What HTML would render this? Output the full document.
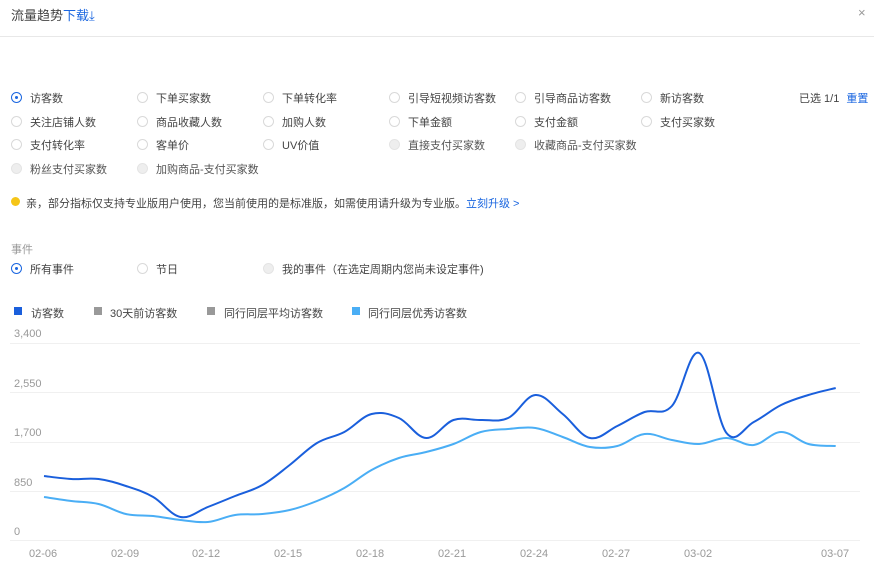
<!DOCTYPE html>
<html><head><meta charset="utf-8"><style>
body{margin:0;width:874px;height:574px;background:#fff;font-family:"Liberation Sans","Noto Sans CJK SC",sans-serif;font-size:11px;color:#444;position:relative;overflow:hidden}
.a{position:absolute;white-space:nowrap}
.r{position:absolute;width:11px;height:11px;border:1px solid #d9d9d9;border-radius:50%;box-sizing:border-box;background:#fff}
.r.on{border-color:#1a66e0}
.r.on:after{content:"";position:absolute;left:3px;top:3px;width:3px;height:3px;border-radius:50%;background:#1a66e0}
.r.dis{background:#eee;border-color:#e4e4e4}
.dis-t{color:#555}
.ax{position:absolute;color:#999;font-size:11px}
</style></head><body>
<div class="a" style="left:11px;top:5px;font-size:13px;color:#444">流量趋势<span style="color:#1a66e0">下载⤓</span></div>
<div class="a" style="left:858px;top:5px;font-size:13px;color:#999">×</div>
<div class="a" style="left:0;top:36px;width:874px;height:1px;background:#e8e8e8"></div>

<div class="r on" style="left:11px;top:92px"></div><div class="a" style="left:30px;top:90px">访客数</div>
<div class="r" style="left:137px;top:92px"></div><div class="a" style="left:156px;top:90px">下单买家数</div>
<div class="r" style="left:263px;top:92px"></div><div class="a" style="left:282px;top:90px">下单转化率</div>
<div class="r" style="left:389px;top:92px"></div><div class="a" style="left:408px;top:90px">引导短视频访客数</div>
<div class="r" style="left:515px;top:92px"></div><div class="a" style="left:534px;top:90px">引导商品访客数</div>
<div class="r" style="left:641px;top:92px"></div><div class="a" style="left:660px;top:90px">新访客数</div>
<div class="a" style="left:799px;top:90px">已选 1/1 <span style="color:#1a66e0;margin-left:4px">重置</span></div>
<div class="r" style="left:11px;top:116px"></div><div class="a" style="left:30px;top:114px">关注店铺人数</div>
<div class="r" style="left:137px;top:116px"></div><div class="a" style="left:156px;top:114px">商品收藏人数</div>
<div class="r" style="left:263px;top:116px"></div><div class="a" style="left:282px;top:114px">加购人数</div>
<div class="r" style="left:389px;top:116px"></div><div class="a" style="left:408px;top:114px">下单金额</div>
<div class="r" style="left:515px;top:116px"></div><div class="a" style="left:534px;top:114px">支付金额</div>
<div class="r" style="left:641px;top:116px"></div><div class="a" style="left:660px;top:114px">支付买家数</div>
<div class="r" style="left:11px;top:139px"></div><div class="a" style="left:30px;top:137px">支付转化率</div>
<div class="r" style="left:137px;top:139px"></div><div class="a" style="left:156px;top:137px">客单价</div>
<div class="r" style="left:263px;top:139px"></div><div class="a" style="left:282px;top:137px">UV价值</div>
<div class="r dis" style="left:389px;top:139px"></div><div class="a dis-t" style="left:408px;top:137px">直接支付买家数</div>
<div class="r dis" style="left:515px;top:139px"></div><div class="a dis-t" style="left:534px;top:137px">收藏商品-支付买家数</div>
<div class="r dis" style="left:11px;top:163px"></div><div class="a dis-t" style="left:30px;top:161px">粉丝支付买家数</div>
<div class="r dis" style="left:137px;top:163px"></div><div class="a dis-t" style="left:156px;top:161px">加购商品-支付买家数</div>

<div class="a" style="left:11px;top:197px;width:9px;height:9px;border-radius:50%;background:#f5c518"></div>
<div class="a" style="left:26px;top:195px">亲，部分指标仅支持专业版用户使用，您当前使用的是标准版，如需使用请升级为专业版。<span style="color:#1a66e0">立刻升级 &gt;</span></div>

<div class="a" style="left:11px;top:241px;color:#999">事件</div>
<div class="r on" style="left:11px;top:263px"></div><div class="a" style="left:30px;top:261px">所有事件</div>
<div class="r" style="left:137px;top:263px"></div><div class="a" style="left:156px;top:261px">节日</div>
<div class="r dis" style="left:263px;top:263px"></div><div class="a" style="left:282px;top:261px">我的事件（在选定周期内您尚未设定事件)</div>

<div class="a" style="left:14px;top:307px;width:8px;height:8px;background:#1a5fdc"></div><div class="a" style="left:31px;top:305px">访客数</div>
<div class="a" style="left:94px;top:307px;width:8px;height:8px;background:#999"></div><div class="a" style="left:110px;top:305px">30天前访客数</div>
<div class="a" style="left:207px;top:307px;width:8px;height:8px;background:#999"></div><div class="a" style="left:224px;top:305px">同行同层平均访客数</div>
<div class="a" style="left:352px;top:307px;width:8px;height:8px;background:#4aaef5"></div><div class="a" style="left:368px;top:305px">同行同层优秀访客数</div>

<div class="ax" style="left:14px;top:328px">3,400</div>
<div class="ax" style="left:14px;top:378px">2,550</div>
<div class="ax" style="left:14px;top:427px">1,700</div>
<div class="ax" style="left:14px;top:477px">850</div>
<div class="ax" style="left:14px;top:526px">0</div>

<svg class="a" style="left:0;top:0" width="874" height="574">
<g stroke="#f0f0f0" stroke-width="1">
<line x1="10" y1="343.5" x2="860" y2="343.5"/><line x1="10" y1="392.5" x2="860" y2="392.5"/>
<line x1="10" y1="442.5" x2="860" y2="442.5"/><line x1="10" y1="491.5" x2="860" y2="491.5"/>
<line x1="10" y1="540.5" x2="860" y2="540.5"/></g>
<path id="l2" fill="none" stroke="#4aaef5" stroke-width="2"/>
<path id="l1" fill="none" stroke="#1a5fdc" stroke-width="2"/>
</svg>
<script>
function sm(p){var d="M"+p[0][0]+","+p[0][1];for(var i=0;i<p.length-1;i++){var a=p[i-1]||p[i],b=p[i],c=p[i+1],e=p[i+2]||c;var t=0.18;d+=" C"+(b[0]+(c[0]-a[0])*t)+","+(b[1]+(c[1]-a[1])*t)+" "+(c[0]-(e[0]-b[0])*t)+","+(c[1]-(e[1]-b[1])*t)+" "+c[0]+","+c[1];}return d;}
var X=function(i){return 44+27.3*i};
var d1=[476,479,479,486,497,517,507,496,485,465,443,432,414,418,438,420,420,418,395,414,438,426,412,406,353,433,422,405,395,388];
var d2=[497,501,504,514,516,520,522,515,514,510,501,488,470,458,452,444,432,429,428,437,447,446,434,440,444,438,445,432,444,446];
var p1=d1.map(function(v,i){return [X(i),v]}),p2=d2.map(function(v,i){return [X(i),v]});
document.getElementById("l1").setAttribute("d",sm(p1));
document.getElementById("l2").setAttribute("d",sm(p2));
</script>
<div class="ax" style="left:29px;top:548px">02-06</div>
<div class="ax" style="left:111px;top:548px">02-09</div>
<div class="ax" style="left:192px;top:548px">02-12</div>
<div class="ax" style="left:274px;top:548px">02-15</div>
<div class="ax" style="left:356px;top:548px">02-18</div>
<div class="ax" style="left:438px;top:548px">02-21</div>
<div class="ax" style="left:520px;top:548px">02-24</div>
<div class="ax" style="left:602px;top:548px">02-27</div>
<div class="ax" style="left:684px;top:548px">03-02</div>
<div class="ax" style="left:821px;top:548px">03-07</div>
</body></html>
